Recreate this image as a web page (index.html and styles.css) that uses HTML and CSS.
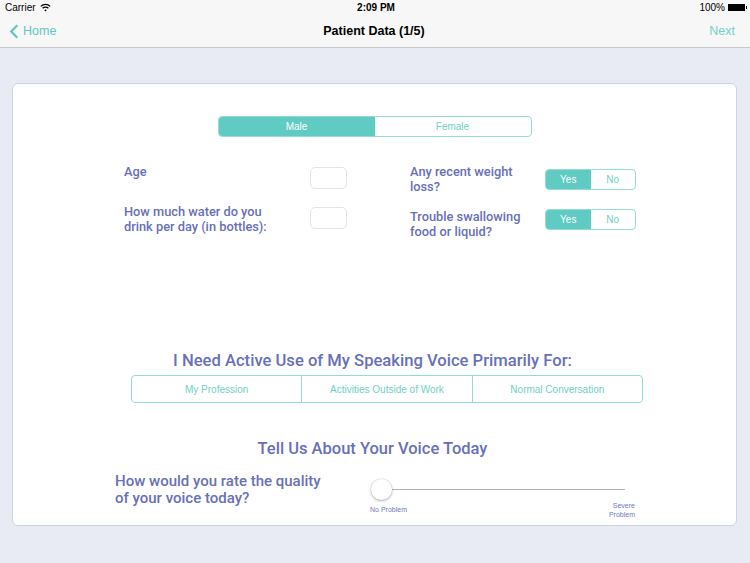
FILE: index.html
```html
<!DOCTYPE html>
<html>
<head>
<meta charset="utf-8">
<link rel="stylesheet" href="styles.css">
</head>
<body>
<div class="status">
  <div class="st-left">Carrier
    <svg class="wifi" width="11" height="9" viewBox="0 0 11 9"><path d="M0.8 3.4 A6.6 6.6 0 0 1 10.2 3.4" fill="none" stroke="#000" stroke-width="1.3"/><path d="M2.6 5.3 A4.1 4.1 0 0 1 8.4 5.3" fill="none" stroke="#000" stroke-width="1.3"/><path d="M5.5 8.6 L4.2 7.1 A1.9 1.9 0 0 1 6.8 7.1 Z" fill="#000"/></svg>
  </div>
  <div class="st-center">2:09 PM</div>
  <div class="st-right">100% <span class="battery"></span></div>
</div>
<div class="nav">
  <div class="back">
    <svg width="10" height="15" viewBox="0 0 10 15"><path d="M8.3 1.2 L2.2 7.5 L8.3 13.8" fill="none" stroke="#5fc8bf" stroke-width="2.3"/></svg>
    <span>Home</span>
  </div>
  <div class="title">Patient Data (1/5)</div>
  <div class="next">Next</div>
</div>
<main class="card">
  <div class="seg gender"><span class="on">Male</span><span>Female</span></div>
  <div class="fields">
    <div class="col left">
      <div class="field"><div class="label">Age</div><span class="input"></span></div>
      <div class="field"><div class="label wide">How much water do you drink per day (in bottles):</div><span class="input"></span></div>
    </div>
    <div class="col right">
      <div class="field"><div class="label">Any recent weight loss?</div><div class="seg yn first"><span class="on">Yes</span><span>No</span></div></div>
      <div class="field"><div class="label">Trouble swallowing food or liquid?</div><div class="seg yn"><span class="on">Yes</span><span>No</span></div></div>
    </div>
  </div>
  <h2 class="h-use">I Need Active Use of My Speaking Voice Primarily For:</h2>
  <div class="seg tri"><span>My Profession</span><span>Activities Outside of Work</span><span>Normal Conversation</span></div>
  <h2 class="h-tell">Tell Us About Your Voice Today</h2>
  <div class="quality">
    <div class="q-label">How would you rate the quality of your voice today?</div>
    <div class="slider">
      <div class="track"><span class="thumb"></span></div>
      <div class="ends"><span>No Problem</span><span class="sev">Severe<br>Problem</span></div>
    </div>
  </div>
</main>
</body>
</html>
```
FILE: styles.css
```css
* { box-sizing: border-box; }
html, body { margin: 0; padding: 0; }
body {
  width: 750px;
  height: 563px;
  overflow: hidden;
  background: #e8ebf3;
  font-family: "Liberation Sans", Arial, sans-serif;
  color: #000;
}
.status {
  height: 20px;
  background: #f7f7f8;
  display: grid;
  grid-template-columns: 1fr auto 1fr;
  align-items: start;
  padding: 2px 3px 0 5px;
  font-size: 10px;
  line-height: 11px;
}
.st-left { display: flex; align-items: center; gap: 4px; }
.wifi { margin-top: -1px; }
.st-center { font-weight: bold; }
.st-right { display: flex; justify-content: flex-end; align-items: center; gap: 3px; }
.battery {
  position: relative;
  width: 17px;
  height: 7px;
  background: #000;
  margin-right: 2px;
}
.battery::after {
  content: "";
  position: absolute;
  right: -2px;
  top: 2px;
  width: 1.5px;
  height: 3px;
  background: #000;
}
.nav {
  height: 28px;
  background: #f7f7f8;
  border-bottom: 1px solid #c8c9cd;
  display: grid;
  grid-template-columns: 1fr auto 1fr;
  align-items: start;
  padding: 4px 15px 0 9px;
  font-size: 12.5px;
  line-height: 15px;
}
.back { display: flex; align-items: center; gap: 4px; color: #5fc8bf; }
.back svg { margin-top: 0; }
.title { font-weight: bold; margin-left: 4px; }
.next { text-align: right; color: #74d1ca; }
.card {
  margin: 35px 13px 0 12px;
  height: 443px;
  background: #fff;
  border: 1px solid #cdd3e3;
  border-radius: 6px;
  padding-top: 32px;
}
.seg {
  display: flex;
  border: 1px solid #93dcd6;
  border-radius: 4px;
  overflow: hidden;
  font-family: "Liberation Sans", Arial, sans-serif;
  font-weight: normal;
  font-size: 10px;
  color: #6fcfc8;
}
.seg span {
  flex: 1;
  display: flex;
  align-items: center;
  justify-content: center;
}
.seg span + span { border-left: 1px solid #93dcd6; }
.seg .on { background: #5fcbc3; color: #fff; }
.seg .on + span { border-left: none; }
.gender { width: 314px; height: 21px; margin: 0 auto; }
.fields {
  display: flex;
  gap: 63px;
  margin: 27px 0 0 111px;
  font-family: Roboto, "Liberation Sans", sans-serif;
  font-weight: 500;
  color: #6770b9;
  font-size: 12.8px;
  line-height: 15px;
}
.col { display: flex; flex-direction: column; }
.col.left { width: 223px; gap: 15px; }
.col.right { width: 226px; gap: 15px; }
.field { display: flex; justify-content: space-between; align-items: flex-start; }
.label { width: 125px; }
.label.wide { width: 160px; }
.input {
  width: 37px;
  height: 22px;
  margin-top: 3px;
  border: 1px solid #e4e4e6;
  border-radius: 5px;
}
.yn { width: 91px; height: 21px; }
.yn.first { margin-top: 5px; }
h2 {
  margin: 0;
  text-align: center;
  font-family: Roboto, "Liberation Sans", sans-serif;
  font-weight: 500;
  color: #6770b9;
}
.h-use { font-size: 16.6px; line-height: 20px; margin-top: 112px; margin-right: 4px; }
.tri { width: 512px; height: 28px; margin: 4px 0 0 118px; }
.h-tell { font-size: 16.5px; line-height: 20px; margin-top: 36px; margin-right: 4px; }
.quality {
  display: flex;
  margin: 14px 0 0 102px;
}
.q-label {
  width: 255px;
  padding-right: 40px;
  font-family: Roboto, "Liberation Sans", sans-serif;
  font-weight: 500;
  color: #6770b9;
  font-size: 15px;
  line-height: 17px;
}
.slider { width: 265px; padding-top: 6px; }
.track {
  position: relative;
  height: 1px;
  margin: 10px 10px 0 12px;
  background: #b3b3b6;
}
.thumb {
  position: absolute;
  left: -11px;
  top: -10px;
  width: 21px;
  height: 21px;
  border-radius: 50%;
  background: #fff;
  box-shadow: 0 1px 3px rgba(0,0,0,0.3), 0 0 0 0.5px rgba(0,0,0,0.08);
}
.ends {
  display: flex;
  justify-content: space-between;
  align-items: flex-start;
  margin-top: 11px;
  font-size: 7px;
  line-height: 9px;
  color: #6f78bb;
}
.ends span:first-child { margin-top: 4px; }
.sev { text-align: right; }
```
